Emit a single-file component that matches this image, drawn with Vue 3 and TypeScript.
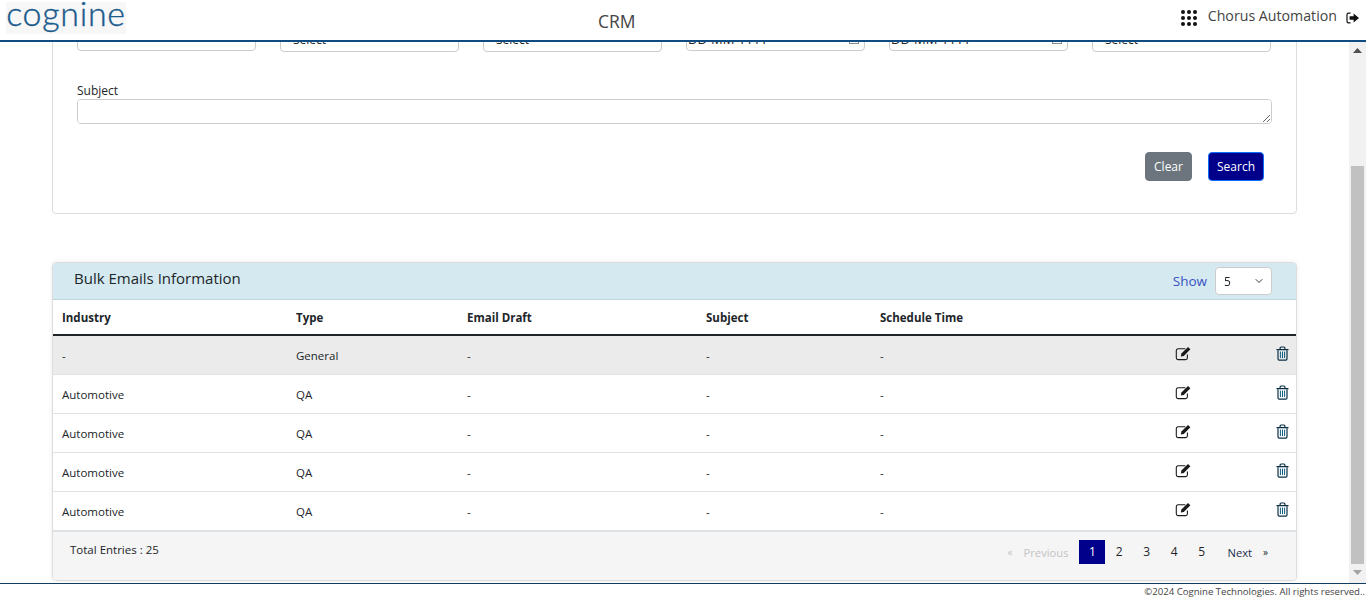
<script setup lang="ts">
import { onMounted, ref } from 'vue';

const filters = [
    { kind: 'text', value: '' },
    { kind: 'select', value: 'Select' },
    { kind: 'select', value: 'Select' },
    { kind: 'date', value: 'DD-MM-YYYY' },
    { kind: 'date', value: 'DD-MM-YYYY' },
    { kind: 'select', value: 'Select' },
];

const rows = [
    { industry: '-', type: 'General' },
    { industry: 'Automotive', type: 'QA' },
    { industry: 'Automotive', type: 'QA' },
    { industry: 'Automotive', type: 'QA' },
    { industry: 'Automotive', type: 'QA' },
];

const scroller = ref<HTMLElement | null>(null);

onMounted(() => {
    // the reference is photographed with the filter row scrolled under the header
    if (scroller.value) scroller.value.scrollTop = 140;
});
</script>

<template>
    <div class="page">
        <header class="topbar">
            <div class="logo">cognine</div>
            <div class="app-title">CRM</div>
            <div class="user-area">
                <div class="apps">
                    <i v-for="n in 9" :key="n"></i>
                </div>
                <span class="user-name">Chorus Automation</span>
                <svg class="logout" width="14" height="12" viewBox="0 0 14 12">
                    <path d="M4.5 1.2H2.6C1.7 1.2 1 1.9 1 2.8v6.4c0 .9.7 1.6 1.6 1.6h1.9" fill="none" stroke="#111" stroke-width="1.2" />
                    <path d="M3.6 4.3h4V1.4L13 6 7.6 10.6V7.7h-4z" fill="#111" />
                </svg>
            </div>
        </header>

        <div class="body">
            <main ref="scroller" class="main">
                <section class="search-card">
                    <div class="filter-grid">
                        <div v-for="(f, i) in filters" :key="i" class="field">
                            <select v-if="f.kind === 'select'" class="control select-control">
                                <option>{{ f.value }}</option>
                            </select>
                            <div v-else class="input-wrap">
                                <input class="control" type="text" :value="f.value" />
                                <svg v-if="f.kind === 'date'" class="calendar" width="10" height="11" viewBox="0 0 10 11">
                                    <path d="M0 1h10v10H0zM1 4v6h8V4z" fill="#8a8a8a" fill-rule="evenodd" />
                                </svg>
                            </div>
                        </div>
                    </div>
                    <div class="subject">
                        <label>Subject</label>
                        <textarea class="control subject-input"></textarea>
                    </div>
                    <div class="actions">
                        <button type="button" class="btn btn-clear">Clear</button>
                        <button type="button" class="btn btn-search">Search</button>
                    </div>
                </section>

                <section class="list-card">
                    <div class="list-head">
                        <h2>Bulk Emails Information</h2>
                        <div class="show">
                            <span>Show</span>
                            <select class="control select-control page-size">
                                <option>5</option>
                            </select>
                        </div>
                    </div>
                    <table>
                        <colgroup>
                            <col style="width: 234px" />
                            <col style="width: 171px" />
                            <col style="width: 239px" />
                            <col style="width: 174px" />
                            <col style="width: 295px" />
                            <col style="width: 101px" />
                            <col />
                        </colgroup>
                        <thead>
                            <tr>
                                <th>Industry</th>
                                <th>Type</th>
                                <th>Email Draft</th>
                                <th>Subject</th>
                                <th>Schedule Time</th>
                                <th></th>
                                <th></th>
                            </tr>
                        </thead>
                        <tbody>
                            <tr v-for="(row, i) in rows" :key="i">
                                <td>{{ row.industry }}</td>
                                <td>{{ row.type }}</td>
                                <td>-</td>
                                <td>-</td>
                                <td>-</td>
                                <td>
                                    <svg class="row-icon" width="17" height="15" viewBox="0 0 17 15">
                                        <path d="M12.4 8.6v3.2c0 1-.8 1.8-1.8 1.8H3.1c-1 0-1.8-.8-1.8-1.8V4.6c0-1 .8-1.8 1.8-1.8h7.2" fill="none" stroke="#1a1a1a" stroke-width="1.1" />
                                        <path d="M13 .9l2.4 2.4-6.6 6.6-3 .6.6-3z" fill="#1a1a1a" />
                                    </svg>
                                </td>
                                <td>
                                    <svg class="row-icon" width="13" height="15" viewBox="0 0 13 15">
                                        <path d="M2 4.2v8.6c0 .8.5 1.3 1.2 1.3h6.6c.7 0 1.2-.5 1.2-1.3V4.2" fill="none" stroke="#0a2f45" stroke-width="1.2" />
                                        <path d="M.5 3.6h12M4.1 3.4V2c0-.6.4-1 1-1h2.8c.6 0 1 .4 1 1v1.4" fill="none" stroke="#0a2f45" stroke-width="1.2" />
                                        <path d="M4.4 5.6v6.5M6.5 5.6v6.5M8.6 5.6v6.5" fill="none" stroke="#0b5a80" stroke-width="1" />
                                    </svg>
                                </td>
                            </tr>
                        </tbody>
                    </table>
                    <div class="list-foot">
                        <span class="total">Total Entries : 25</span>
                        <nav class="pager">
                            <span class="muted quote">«</span>
                            <span class="muted prev">Previous</span>
                            <span class="num current">1</span>
                            <span class="num">2</span>
                            <span class="num">3</span>
                            <span class="num">4</span>
                            <span class="num">5</span>
                            <span class="next">Next</span>
                            <span class="quote">»</span>
                        </nav>
                    </div>
                </section>
            </main>

            <!-- the browser hides native scrollbars when photographed, so the rail is drawn -->
            <div class="scroll-rail" aria-hidden="true">
                <svg class="rail-arrow" width="9" height="5" viewBox="0 0 9 5"><path d="M4.5 0L9 5H0z" fill="#505050" /></svg>
                <div class="rail-thumb"></div>
                <svg class="rail-arrow rail-arrow-end" width="9" height="5" viewBox="0 0 9 5"><path d="M0 0h9L4.5 5z" fill="#a3a3a3" /></svg>
            </div>
        </div>

        <footer class="copyright">©2024 Cognine Technologies. All rights reserved..</footer>
    </div>
</template>

<style>
html,
body {
    margin: 0;
    overflow: hidden;
}
</style>

<style scoped>
.page {
    height: 100vh;
    display: flex;
    flex-direction: column;
    font-family: 'Open Sans', 'Noto Sans', sans-serif;
    color: #212529;
    background: #fff;
}

.topbar {
    flex: none;
    height: 40px;
    border-bottom: 2px solid #0f4c81;
    display: flex;
    align-items: flex-start;
    position: relative;
    background: #fff;
}

.logo {
    margin: 2px 0 0 6px;
    width: 120px;
    height: 32px;
    background: #f7f7f7;
    color: #1b5b8c;
    font-family: 'Lato', sans-serif;
    font-weight: 300;
    font-size: 34px;
    line-height: 22px;
    letter-spacing: 0.7px;
    text-align: center;
    -webkit-text-stroke: 0.4px #1b5b8c;
}

.app-title {
    position: absolute;
    left: 598px;
    top: 9px;
    font-size: 17.5px;
    line-height: 24px;
    color: #444;
}

.user-area {
    margin-left: auto;
    padding: 6px 6px 0 0;
    display: flex;
    align-items: flex-start;
}

.apps {
    display: grid;
    grid-template-columns: repeat(3, 4px);
    gap: 2px;
    margin: 4px 11px 0 0;
}

.apps i {
    width: 4px;
    height: 4px;
    border-radius: 50%;
    background: #111;
}

.user-name {
    font-size: 14.2px;
    line-height: 20px;
    color: #444;
}

.logout {
    margin: 6px 0 0 9px;
}

.body {
    flex: 1;
    min-height: 0;
    display: flex;
}

.main {
    flex: 1;
    min-width: 0;
    overflow-y: scroll;
    padding: 30px 52px 8px;
    box-sizing: border-box;
}

.scroll-rail {
    flex: none;
    width: 17px;
    background: #f1f1f1;
    display: flex;
    flex-direction: column;
    align-items: center;
}

.rail-arrow {
    margin-top: 6px;
}

.rail-thumb {
    width: 13px;
    height: 398px;
    margin-top: 113px;
    background: #c1c1c1;
}

.rail-arrow-end {
    margin-top: 6px;
}

.search-card {
    border: 1px solid #ddd;
    border-radius: 4px;
    padding: 0 24px 32px;
    box-sizing: border-box;
}

.filter-grid {
    display: grid;
    grid-template-columns: repeat(6, 1fr);
    gap: 24px;
    padding: 93px 1px 0 0;
}

.subject label {
    display: block;
    font-size: 12px;
    line-height: 16px;
    color: #212529;
}

.control {
    display: block;
    width: 100%;
    box-sizing: border-box;
    border: 1px solid #ccc;
    border-radius: 4px;
    background-color: #fff;
    font-family: inherit;
    font-size: 12px;
    color: #212529;
    outline: none;
}

.input-wrap {
    position: relative;
}

.input-wrap .control {
    height: 25px;
    padding: 0 1px;
    font-size: 13px;
}

.calendar {
    position: absolute;
    right: 6px;
    top: 7px;
}

.select-control {
    appearance: none;
    height: 26px;
    padding: 0 24px 0 12px;
    background-image: url("data:image/svg+xml,%3Csvg xmlns='http://www.w3.org/2000/svg' viewBox='0 0 16 16'%3E%3Cpath fill='none' stroke='%23343a40' stroke-linecap='round' stroke-linejoin='round' stroke-width='2' d='m2 5 6 6 6-6'/%3E%3C/svg%3E");
    background-repeat: no-repeat;
    background-position: right 7px center;
    background-size: 10px 8px;
}

.subject {
    margin-top: 31px;
}

.subject-input {
    height: 25px;
    min-height: 25px;
    padding: 4px 10px;
}

.actions {
    display: flex;
    justify-content: flex-end;
    gap: 16px;
    margin: 28px 8px 0 0;
}

.btn {
    height: 29px;
    padding: 0;
    border-radius: 4px;
    font-family: inherit;
    font-size: 12px;
    color: #fff;
}

.btn-clear {
    width: 47px;
    background: #6c757d;
    border: 1px solid #6c757d;
}

.btn-search {
    width: 56px;
    background: #00008b;
    border: 1px solid #0d6efd;
}

.list-card {
    margin-top: 48px;
    border: 1px solid #ddd;
    border-radius: 4px;
    box-shadow: 0 0 4px rgba(0, 0, 0, 0.08);
    overflow: hidden;
}

.list-head {
    height: 36px;
    background: #d4eaf0;
    border-bottom: 1px solid #bfd3da;
    display: flex;
    align-items: flex-start;
    justify-content: space-between;
    padding: 0 24px 0 21px;
}

.list-head h2 {
    margin: 3px 0 0;
    font-size: 15px;
    line-height: 24px;
    font-weight: 400;
    color: #212529;
}

.show {
    display: flex;
    align-items: center;
    gap: 8px;
    height: 36px;
    font-size: 13.5px;
    color: #3a4fc4;
}

.page-size {
    width: 57px;
    height: 28px;
    padding-left: 8px;
}

table {
    width: 100%;
    border-collapse: collapse;
    table-layout: fixed;
    font-size: 11.5px;
}

th {
    height: 34px;
    padding: 0 9px;
    text-align: left;
    font-weight: 700;
    border-bottom: 2px solid #212529;
}

td {
    height: 38px;
    padding: 0 9px;
    border-bottom: 1px solid #dee2e6;
}

tbody tr:first-child td {
    background: #ebebeb;
}

.row-icon {
    display: block;
    margin-top: -3px;
}

.list-foot {
    height: 49px;
    background: #f5f5f5;
    border-top: 1px solid #dee2e6;
    display: flex;
    justify-content: space-between;
    align-items: flex-start;
    font-size: 11.5px;
    box-sizing: border-box;
}

.total {
    margin: 10px 0 0 17px;
}

.pager {
    display: flex;
    align-items: center;
    height: 24px;
    margin: 8px 28px 0 0;
    font-size: 11.2px;
}

.muted {
    color: #c4c4c4;
}

.quote {
    font-size: 10px;
}

.prev {
    margin: 0 11px 0 11px;
}

.num {
    width: 27.5px;
    text-align: center;
    line-height: 24px;
    font-size: 12px;
}

.current {
    width: 26px;
    background: #00008b;
    color: #fff;
}

.next {
    margin: 0 11px 0 12px;
    color: #1d2d50;
}

.copyright {
    flex: none;
    height: 16px;
    box-sizing: border-box;
    border-top: 1px solid #0f3d63;
    text-align: right;
    padding-right: 1px;
    font-size: 9.6px;
    line-height: 16px;
    color: #444;
    background: #fff;
}
</style>
